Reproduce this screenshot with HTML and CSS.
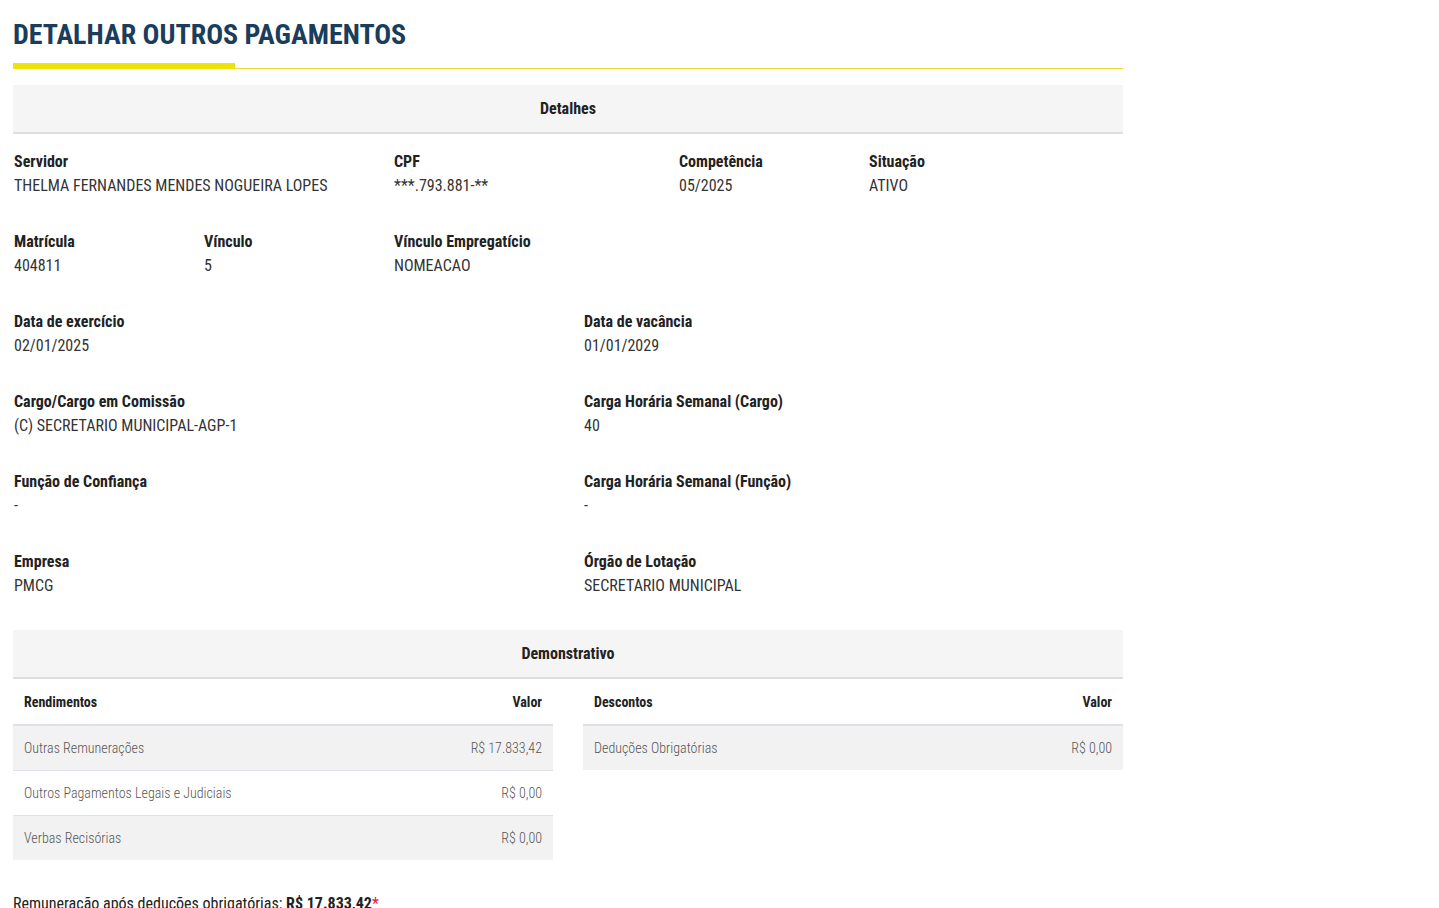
FILE: index.html
```html
<!DOCTYPE html>
<html lang="pt-BR">
<head>
    <meta charset="UTF-8">
    <title>Detalhar Outros Pagamentos</title>
    <link rel="stylesheet" href="styles.css">
</head>
<body>
<div class="page">
    <h1 class="titulo">DETALHAR OUTROS PAGAMENTOS</h1>
    <div class="titulo-linha"><span class="grossa"></span><span class="fina"></span></div>

    <div class="secao">Detalhes</div>

    <div class="linha">
        <div class="campo c4"><b>Servidor</b><span>THELMA FERNANDES MENDES NOGUEIRA LOPES</span></div>
        <div class="campo c3"><b>CPF</b><span>***.793.881-**</span></div>
        <div class="campo c2"><b>Competência</b><span>05/2025</span></div>
        <div class="campo c2"><b>Situação</b><span>ATIVO</span></div>
    </div>
    <div class="linha">
        <div class="campo c2"><b>Matrícula</b><span>404811</span></div>
        <div class="campo c2"><b>Vínculo</b><span>5</span></div>
        <div class="campo c4"><b>Vínculo Empregatício</b><span>NOMEACAO</span></div>
    </div>
    <div class="linha">
        <div class="campo c6"><b>Data de exercício</b><span>02/01/2025</span></div>
        <div class="campo c6"><b>Data de vacância</b><span>01/01/2029</span></div>
    </div>
    <div class="linha">
        <div class="campo c6"><b>Cargo/Cargo em Comissão</b><span>(C) SECRETARIO MUNICIPAL-AGP-1</span></div>
        <div class="campo c6"><b>Carga Horária Semanal (Cargo)</b><span>40</span></div>
    </div>
    <div class="linha">
        <div class="campo c6"><b>Função de Confiança</b><span>-</span></div>
        <div class="campo c6"><b>Carga Horária Semanal (Função)</b><span>-</span></div>
    </div>
    <div class="linha">
        <div class="campo c6"><b>Empresa</b><span>PMCG</span></div>
        <div class="campo c6"><b>Órgão de Lotação</b><span>SECRETARIO MUNICIPAL</span></div>
    </div>

    <div class="secao">Demonstrativo</div>

    <div class="tabelas">
        <table class="tabela">
            <thead>
            <tr><th>Rendimentos</th><th class="valor">Valor</th></tr>
            </thead>
            <tbody>
            <tr><td>Outras Remunerações</td><td class="valor">R$ 17.833,42</td></tr>
            <tr><td>Outros Pagamentos Legais e Judiciais</td><td class="valor">R$ 0,00</td></tr>
            <tr><td>Verbas Recisórias</td><td class="valor">R$ 0,00</td></tr>
            </tbody>
        </table>
        <table class="tabela">
            <thead>
            <tr><th>Descontos</th><th class="valor">Valor</th></tr>
            </thead>
            <tbody>
            <tr><td>Deduções Obrigatórias</td><td class="valor">R$ 0,00</td></tr>
            </tbody>
        </table>
    </div>

    <p class="total">Remuneração após deduções obrigatórias: <b>R$ 17.833,42</b><span class="ast">*</span></p>
</div>
</body>
</html>
```
FILE: styles.css
```css
*{
    margin: 0;
    padding: 0;
    box-sizing: border-box;
}
body{
    font-family: "Roboto Condensed", Roboto, "Liberation Sans", sans-serif;
    font-stretch: condensed;
    color: #222;
    background: #fff;
}
.page{
    width: 1110px;
    margin-left: 13px;
    padding-top: 17px;
}
.titulo{
    font-size: 28px;
    font-weight: 700;
    color: #1b3d5c;
    line-height: 36px;
}
.titulo-linha{
    margin-top: 10px;
    display: flex;
    align-items: flex-end;
    height: 6px;
}
.titulo-linha .grossa{
    width: 222px;
    height: 6px;
    background: #efe10e;
}
.titulo-linha .fina{
    flex: 1;
    height: 1px;
    background: #e6dc3a;
}
.secao{
    margin-top: 16px;
    height: 49px;
    line-height: 47px;
    background: #f5f5f5;
    border-bottom: 2px solid #dedede;
    text-align: center;
    font-size: 16px;
    font-weight: 700;
    color: #222;
}
.linha{
    display: flex;
    height: 80px;
    padding-top: 16px;
}
.linha:last-of-type{
    height: 81px;
}
.campo{
    flex-shrink: 0;
    font-size: 16px;
    line-height: 24px;
    padding-left: 1px;
}
.campo b{
    display: block;
    font-weight: 700;
}
.campo span{
    display: block;
    color: #333;
}
.c2{ width: 190px; }
.c3{ width: 285px; }
.c4{ width: 380px; }
.c6{ width: 570px; }
.tabelas{
    display: flex;
    gap: 30px;
    align-items: flex-start;
}
.tabela{
    width: 540px;
    border-collapse: collapse;
    font-size: 14px;
}
.tabela th{
    text-align: left;
    font-weight: 700;
    color: #222;
    height: 46px;
    padding: 0 11px 0 11px;
    border-bottom: 2px solid #dee2e6;
}
.tabela td{
    height: 45px;
    padding: 0 11px;
    font-weight: 300;
    color: #555;
    border-top: 1px solid #dee2e6;
}
.tabela tbody tr:nth-child(odd){
    background: #f2f2f2;
}
.tabela .valor{
    text-align: right;
}
.total{
    margin-top: 34px;
    font-size: 16px;
    color: #222;
}
.total b{
    font-weight: 700;
}
.ast{
    color: #e0223a;
}
```
